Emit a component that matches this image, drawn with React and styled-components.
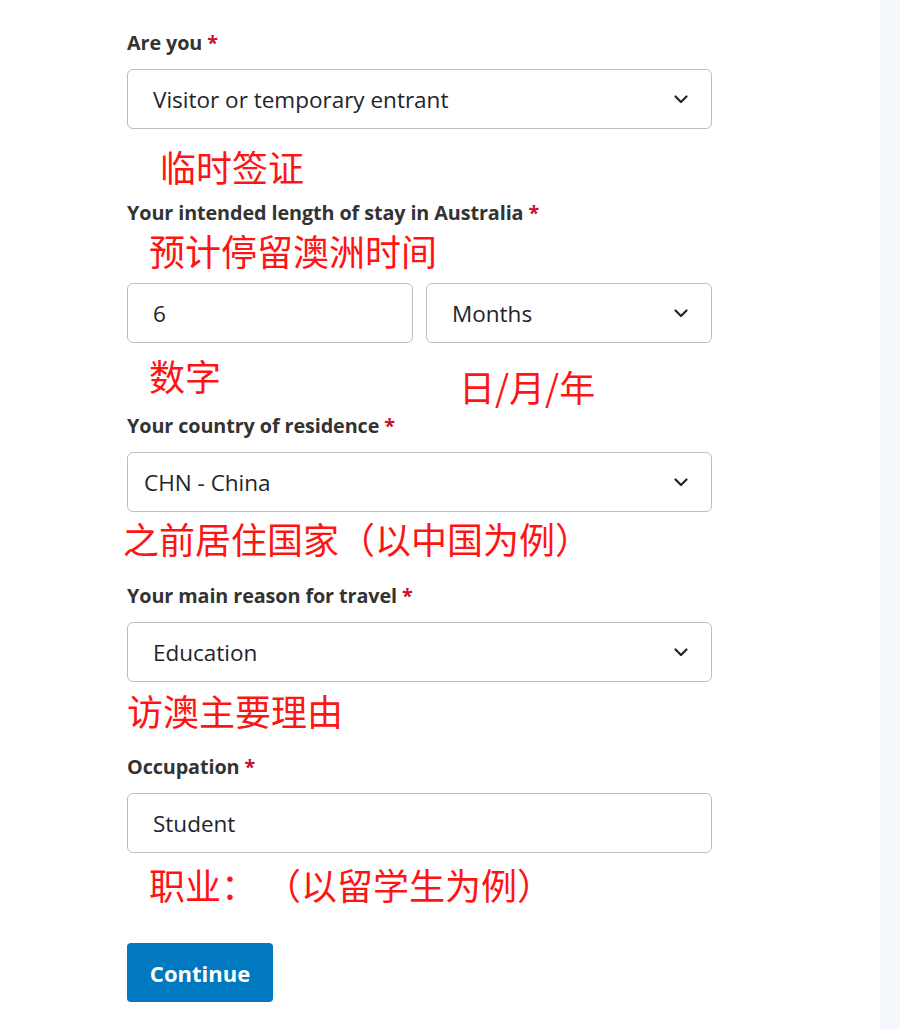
import React from 'react';
import styled, {createGlobalStyle} from 'styled-components';

const Global = createGlobalStyle`
body {
  margin: 0;
  background: #fff;
  font-family: "Open Sans", "Noto Sans", sans-serif;
}
`

const Page = styled.div`
display: flex;
min-height: 1029px;
`

const Main = styled.div`
width: 880px;
padding: 30px 0 0 127px;
box-sizing: border-box;
`

const Aside = styled.div`
flex: 1;
background-color: #f4f8fc;
`

const Form = styled.div`
width: 585px;
display: flex;
flex-direction: column;
`

const Label = styled.div`
font-size: 19.8px;
line-height: 26px;
font-weight: 700;
color: #333;
letter-spacing: -0.1px;
margin-top: ${p => p.mt || 0}px;
`

const Star = styled.span`
color: #c8102e;
`

const Field = styled.div`
height: 60px;
box-sizing: border-box;
border: 1px solid #bdbdbd;
border-radius: 6px;
background: #fff;
display: flex;
align-items: center;
justify-content: space-between;
padding: 0 22px 0 ${p => p.pl || 25}px;
margin-top: ${p => p.mt || 0}px;
font-size: 22.5px;
color: #212529;
`

const Chevron = () => (
  <svg width="16" height="16" viewBox="0 0 16 16">
    <path d="M2.5 5.5l5.5 5.5 5.5-5.5" fill="none" stroke="#212529" strokeWidth="2.2" strokeLinecap="round" strokeLinejoin="round"/>
  </svg>
)

const Row = styled.div`
display: grid;
grid-template-columns: 286px 286px;
column-gap: 13px;
margin-top: ${p => p.mt || 0}px;
`

const Note = styled.div`
font-family: "Noto Sans CJK SC", sans-serif;
font-size: 36px;
line-height: 40px;
color: #ff1414;
margin-top: ${p => p.mt || 0}px;
margin-left: ${p => p.ml || 0}px;
padding-top: ${p => p.pt || 0}px;
white-space: pre;
`

const Button = styled.button`
align-self: flex-start;
width: 146px;
height: 59px;
margin-top: 39px;
border: none;
border-radius: 4px;
background-color: #0079c1;
color: #fff;
font-family: "Open Sans", "Noto Sans", sans-serif;
font-size: 22px;
font-weight: 700;
cursor: pointer;
`

function App() {
  return (
    <Page>
      <Global />
      <Main>
        <Form>
          <Label>Are you <Star>*</Star></Label>
          <Field mt={13}>
            <span>Visitor or temporary entrant</span>
            <Chevron />
          </Field>
          <Note mt={17} ml={33}>临时签证</Note>

          <Label mt={14}>Your intended length of stay in Australia <Star>*</Star></Label>
          <Note mt={4} ml={22}>预计停留澳洲时间</Note>
          <Row mt={13}>
            <Field>
              <span>6</span>
            </Field>
            <Field>
              <span>Months</span>
              <Chevron />
            </Field>
          </Row>
          <Row mt={12}>
            <Note ml={22}>数字</Note>
            <Note ml={33} pt={11}>日/月/年</Note>
          </Row>

          <Label mt={7}>Your country of residence <Star>*</Star></Label>
          <Field mt={13} pl={16}>
            <span>CHN - China</span>
            <Chevron />
          </Field>
          <Note mt={6} ml={-4}>之前居住国家（以中国为例）</Note>

          <Label mt={25}>Your main reason for travel <Star>*</Star></Label>
          <Field mt={13}>
            <span>Education</span>
            <Chevron />
          </Field>
          <Note mt={8} ml={0}>访澳主要理由</Note>

          <Label mt={24}>Occupation <Star>*</Star></Label>
          <Field mt={13}>
            <span>Student</span>
          </Field>
          <Note mt={11} ml={22}>{'职业： （以留学生为例）'}</Note>

          <Button>Continue</Button>
        </Form>
      </Main>
      <Aside />
    </Page>
  )
}

export default App;
